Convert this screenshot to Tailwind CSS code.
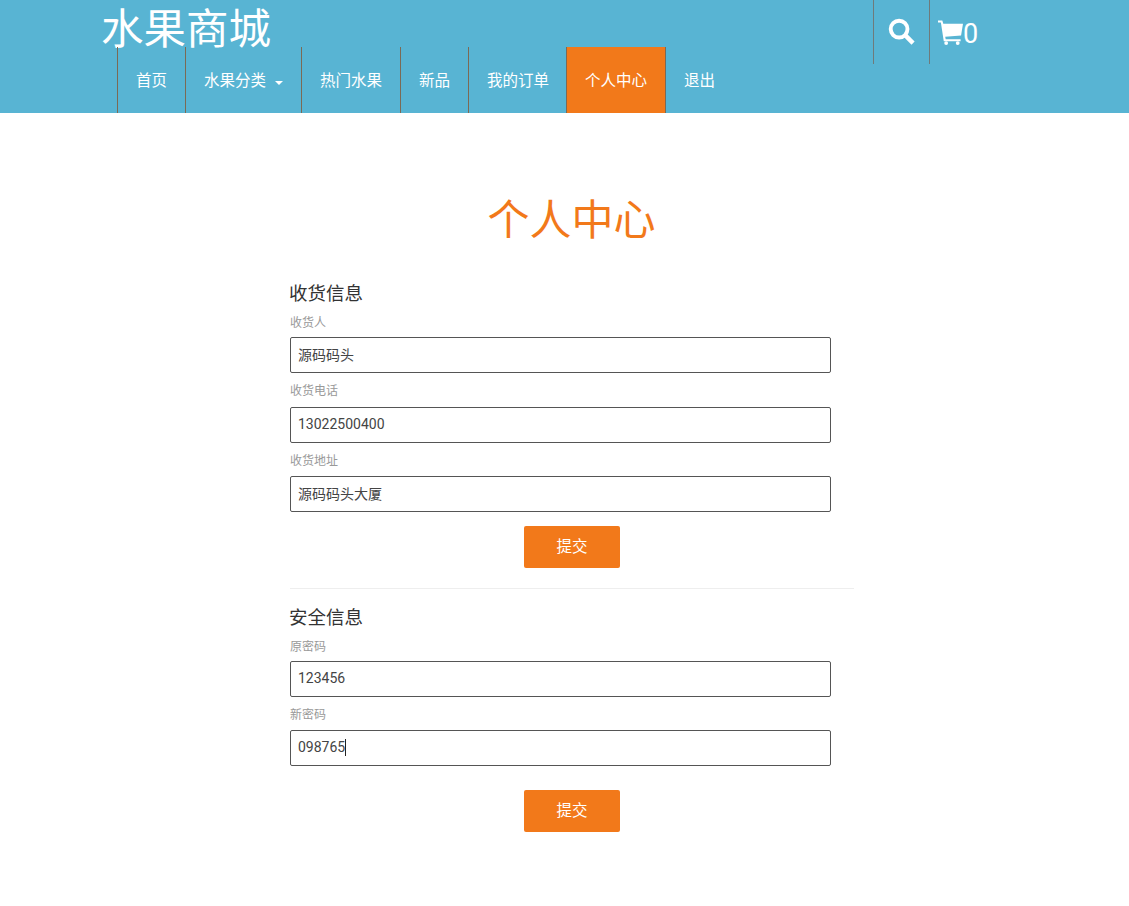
<!DOCTYPE html>
<html lang="zh-CN">
<head>
  <meta charset="UTF-8">
  <meta name="viewport" content="width=device-width, initial-scale=1.0">
  <title>个人中心</title>
  <script src="https://cdn.jsdelivr.net/npm/@tailwindcss/browser@4"></script>
</head>
<body class="bg-white font-[Roboto,'Noto_Sans_CJK_SC',sans-serif] text-[#333]">
  <!-- header -->
  <header class="bg-[#58b4d3] h-[113px] text-white">
    <div class="flex h-[47px] pl-[101px]">
      <a class="text-[42.5px] leading-[60px] h-[47px] w-[172px]">水果商城</a>
      <div class="ml-[600px] flex h-[64px]">
        <div class="w-[57px] border-x border-[#6f7a7a] flex items-center justify-center pb-[2px]">
          <svg class="w-[27px] h-[27px]" viewBox="0 0 28 28" fill="none" stroke="white">
            <circle cx="11.5" cy="11.5" r="8.7" stroke-width="4"/>
            <path d="M17.5 17.5 L26 26" stroke-width="4.6"/>
          </svg>
        </div>
        <div class="flex items-center pl-[8px] pt-[1px]">
          <svg class="w-[25px] h-[25px]" viewBox="0 0 26 26" fill="white">
            <path d="M0 0.5 H4.5 L5.5 4 H26 L24 16 L7.5 17.5 L8 20 H23.5 V22 H6 L3 2.5 H0 Z"/>
            <circle cx="8.5" cy="24" r="2"/>
            <circle cx="20.5" cy="24" r="2"/>
          </svg>
          <span class="text-[27px] leading-none mt-[4px]">0</span>
        </div>
      </div>
    </div>
    <nav class="flex h-[66px] pl-[117px] text-[15.5px]">
      <a class="border-l border-[#7b6a55] pl-[18px] pr-[18px] pt-[3px] flex items-center">首页</a>
      <a class="border-l border-[#7b6a55] pl-[18px] pr-[18px] pt-[3px] flex items-center">水果分类<span class="ml-[9px] mt-[2px] border-x-4 border-t-4 border-x-transparent border-t-white"></span></a>
      <a class="border-l border-[#7b6a55] pl-[18px] pr-[18px] pt-[3px] flex items-center">热门水果</a>
      <a class="border-l border-[#7b6a55] pl-[18px] pr-[18px] pt-[3px] flex items-center">新品</a>
      <a class="border-l border-[#7b6a55] pl-[18px] pr-[17px] pt-[3px] flex items-center">我的订单</a>
      <a class="border-x border-[#7b6a55] pl-[18px] pr-[18px] pt-[3px] flex items-center bg-[#f2791a]">个人中心</a>
      <a class="px-[18px] pt-[3px] flex items-center">退出</a>
    </nav>
  </header>

  <main class="w-[563px] ml-[290px]">
    <h1 class="text-[42px] leading-[60px] text-[#f2791a] text-center mt-[78px]">个人中心</h1>

    <form class="mt-[30px]">
      <h3 class="text-[18.5px] leading-[26px] text-[#333] -ml-px">收货信息</h3>
      <label class="block text-xs leading-[17px] text-[#999] mt-[8px]">收货人</label>
      <input class="block w-[541px] h-[36px] mt-[5px] px-[7px] pb-[2px] text-sm text-[#444] border border-[#555] rounded-[2px]" value="源码码头">
      <label class="block text-xs leading-[17px] text-[#999] mt-[10px]">收货电话</label>
      <input class="block w-[541px] h-[36px] mt-[7px] px-[7px] pb-[2px] text-sm text-[#444] border border-[#555] rounded-[2px]" value="13022500400">
      <label class="block text-xs leading-[17px] text-[#999] mt-[10px]">收货地址</label>
      <input class="block w-[541px] h-[36px] mt-[6px] px-[7px] pb-[2px] text-sm text-[#444] border border-[#555] rounded-[2px]" value="源码码头大厦">
      <button type="button" class="block w-[96px] h-[42px] mt-[14px] ml-[234px] pt-[2px] bg-[#f2791a] text-white text-[15.5px] rounded-[2px]">提交</button>
    </form>

    <hr class="mt-[20px] w-[564px] border-[#eee]">

    <form class="mt-[16px]">
      <h3 class="text-[18.5px] leading-[26px] text-[#333] -ml-px">安全信息</h3>
      <label class="block text-xs leading-[17px] text-[#999] mt-[8px]">原密码</label>
      <input class="block w-[541px] h-[36px] mt-[5px] px-[7px] pb-[2px] text-sm text-[#444] border border-[#555] rounded-[2px]" value="123456">
      <label class="block text-xs leading-[17px] text-[#999] mt-[10px]">新密码</label>
      <div class="relative mt-[6px] w-[541px]">
        <input class="block w-[541px] h-[36px] px-[7px] pb-[2px] text-sm text-[#444] border border-[#555] rounded-[2px]" value="098765">
        <span class="absolute left-[55px] top-[9px] w-px h-[17px] bg-[#222]"></span>
      </div>
      <button type="button" class="block w-[96px] h-[42px] mt-[24px] ml-[234px] pt-[2px] bg-[#f2791a] text-white text-[15.5px] rounded-[2px]">提交</button>
    </form>
  </main>
</body>
</html>
